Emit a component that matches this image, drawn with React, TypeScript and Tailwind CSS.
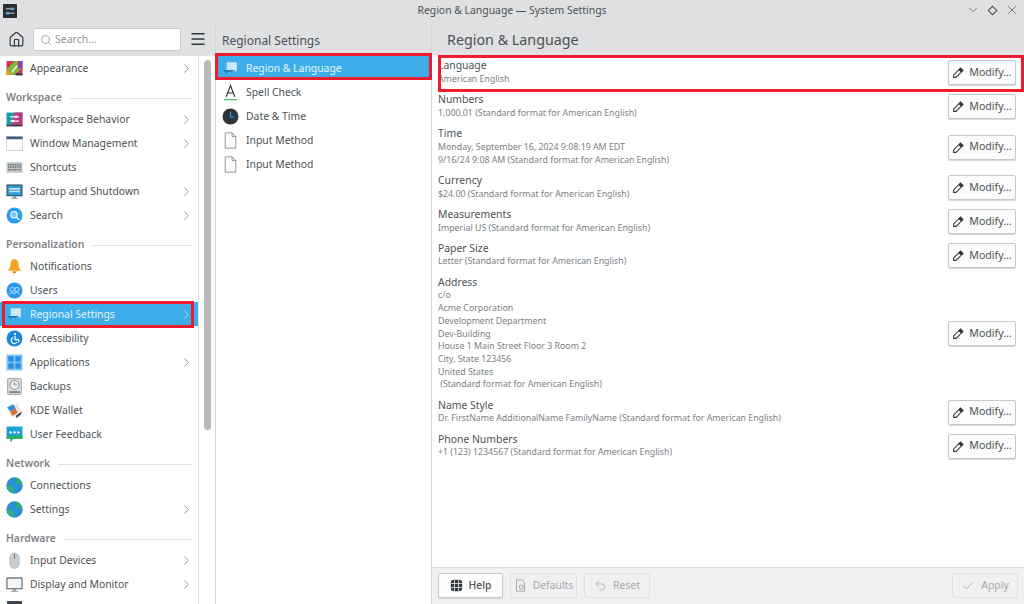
import type { ReactNode } from "react";
import { ChevronRight, ChevronDown, X, Search, Menu, Home, Check, Undo2 } from "lucide-react";

const font = "font-['Noto_Sans',sans-serif]";

function Svg({ children, size = 17 }: { children: ReactNode; size?: number }) {
  return (
    <svg width={size} height={size} viewBox="0 0 16 16" className="shrink-0">
      {children}
    </svg>
  );
}

const Appearance = () => (
  <Svg>
    <rect x="0.5" y="1" width="15" height="13" fill="#d9304f" />
    <path d="M8 1h7.5v6L8 14H.5V9z" fill="#7fba3c" />
    <path d="M11 1h4.5v7L11 8z" fill="#8e44ad" />
    <path d="M.5 9 6 14H.5z" fill="#f39c1f" />
    <path d="M5 11l5-6 1 1-5 6z" fill="#f4f4f4" />
    <rect x="9" y="12.5" width="6.5" height="2" fill="#31363b" />
  </Svg>
);
const Behavior = () => (
  <Svg>
    <rect x="0.5" y="1.5" width="15" height="12" fill="#1d99a8" />
    <path d="M8 1.5h7.5v12H5z" fill="#c43a82" />
    <rect x="0.5" y="13" width="15" height="1.5" fill="#31363b" />
    <path d="M4 5.5h8M4 9.5h8" stroke="#fff" strokeWidth="1" />
    <circle cx="9.5" cy="5.5" r="1.2" fill="#fff" />
    <circle cx="6.5" cy="9.5" r="1.2" fill="#fff" />
  </Svg>
);
const WindowIcon = () => (
  <Svg>
    <rect x="0.5" y="1.5" width="15" height="13" fill="#fcfcfc" stroke="#b6bbc0" strokeWidth="0.6" />
    <rect x="0.5" y="1.5" width="15" height="2.5" fill="#3f5f82" />
  </Svg>
);
const Keyboard = () => (
  <Svg>
    <rect x="0.5" y="3" width="15" height="10" rx="0.5" fill="#bfc5c7" />
    <path d="M2 5.5h12M2 7.7h12M2 9.9h12" stroke="#5c6366" strokeWidth="1.2" strokeDasharray="1 0.6" />
  </Svg>
);
const Monitor = ({ light = false }: { light?: boolean }) => (
  <Svg>
    <rect x="0.5" y="1.5" width="15" height="11" rx="0.5" fill="#31363b" />
    <rect x="1.3" y="2.3" width="13.4" height="9.4" fill={light ? "#f2f6f8" : "#2f9bd8"} />
    {!light && <path d="M3 5.5h10M3 8h10" stroke="#d6e4ea" strokeWidth="1.5" />}
    <path d="M6.5 12.5h3v1.5h-3z" fill="#7f8c8d" />
    <path d="M4.5 14.5h7" stroke="#a5acb0" />
  </Svg>
);
const DarkBox = () => (
  <Svg>
    <rect x="1" y="1" width="14" height="12" fill="#3a4045" />
  </Svg>
);
const SearchIcon = () => (
  <Svg>
    <circle cx="8" cy="8" r="7.5" fill="#2b9df0" />
    <circle cx="7.5" cy="7.3" r="3" fill="#7cc6f7" stroke="#fff" strokeWidth="1" />
    <path d="M9.8 9.6l2.7 2.7" stroke="#fff" strokeWidth="1.2" />
  </Svg>
);
const Bell = () => (
  <Svg>
    <path d="M8 1.2c-2.8 0-3.8 2.2-3.8 4.4 0 3-1 4.6-2.7 6.4h13c-1.7-1.8-2.7-3.4-2.7-6.4C11.800 3.400 10.800 1.200 8 1.200z" fill="#f5a623" />
    <path d="M6 12.500h4a2 2 0 0 1-4 0z" fill="#d98a12" />
  </Svg>
);
const Users = () => (
  <Svg>
    <circle cx="8" cy="8" r="7.5" fill="#2a97ee" />
    <circle cx="6" cy="7" r="2" fill="none" stroke="#bfe0fa" strokeWidth="0.9" />
    <circle cx="10.300" cy="7" r="2" fill="none" stroke="#bfe0fa" strokeWidth="0.9" />
    <path d="M3 11.500c.8-1.500 5.200-1.500 6 0M8 10c1.500-.8 4-.6 5 1.500" stroke="#bfe0fa" strokeWidth="0.9" fill="none" />
  </Svg>
);
const Bubble = () => (
  <Svg>
    <path d="M4.500 2h9.500v8.500H7.500L5 13v-2.500H2l2.500-2z" fill="#cfe6f7" />
    <path d="M1.500 9.500h11l-3 1.500H6.500L4 13.500V11H1.500z" fill="#1b7ac2" />
  </Svg>
);
const Accessibility = () => (
  <Svg>
    <circle cx="8" cy="8" r="7.5" fill="#1e88d8" />
    <circle cx="8.500" cy="3.800" r="1" fill="#fff" />
    <path d="M8.500 5.500v3.500h3l1 2.500M6.800 7a3 3 0 1 0 3.700 4.300" stroke="#fff" strokeWidth="1.100" fill="none" />
  </Svg>
);
const Apps = () => (
  <Svg>
    <rect x="0.500" y="0.500" width="15" height="15" fill="#7cc4f3" />
    <rect x="2.200" y="2.200" width="5" height="5" rx="0.800" fill="#2a8fdc" />
    <rect x="8.800" y="2.200" width="5" height="5" rx="0.800" fill="#2a8fdc" />
    <rect x="2.200" y="8.800" width="5" height="5" rx="0.800" fill="#2a8fdc" />
    <rect x="8.800" y="8.800" width="5" height="5" rx="0.800" fill="#2a8fdc" />
  </Svg>
);
const Backups = () => (
  <Svg>
    <rect x="1.500" y="0.500" width="13" height="15" rx="1" fill="#d9dcdd" stroke="#8b9194" strokeWidth="0.700" />
    <circle cx="8" cy="6.500" r="4.300" fill="#eff0f1" stroke="#7a8084" strokeWidth="0.800" />
    <path d="M8 4v2.500h2.500" stroke="#7a8084" strokeWidth="0.800" fill="none" />
    <rect x="3" y="12.500" width="10" height="1.500" fill="#6f7578" />
  </Svg>
);
const Wallet = () => (
  <Svg>
    <path d="M1 6l9-5 5 8-9 5.500z" fill="#e6e8e9" />
    <path d="M1 5l6-3 2 4-5 3z" fill="#2f8fd8" />
    <path d="M4 9l5-3 2 4-5 3z" fill="#e8672c" />
    <path d="M9 13l6-4-1 3-4 3z" fill="#37536e" />
  </Svg>
);
const Feedback = () => (
  <Svg>
    <rect x="0.500" y="0.500" width="15" height="11.500" fill="#1ea0d8" />
    <path d="M0.500 9h15v3H7l-3 3.500V12H.5z" fill="#27ae60" />
    <circle cx="4.300" cy="6" r="1.100" fill="#fff" />
    <circle cx="8" cy="6" r="1.100" fill="#fff" />
    <circle cx="11.700" cy="6" r="1.100" fill="#fff" />
  </Svg>
);
const Globe = () => (
  <Svg>
    <circle cx="8" cy="8" r="7.700" fill="#2a8fd0" />
    <path d="M1.500 9c2-1.500 3.500-.5 5 .8s1 3-.5 5.500C3.500 14.500 1.800 12 1.500 9zM8.500 1c1.500.8 2 2 1 3s-.5 2.500 1.500 2.500 3-1 4.300-.5c-.6-2.500-3.500-5-6.800-5z" fill="#2fae7a" />
  </Svg>
);
const Mouse = () => (
  <Svg>
    <rect x="3.500" y="1" width="9" height="14.500" rx="4.500" fill="#c9ced1" stroke="#9aa0a4" strokeWidth="0.500" />
    <path d="M8 1.500v5" stroke="#6f7578" strokeWidth="1" />
  </Svg>
);
const Clock = () => (
  <Svg>
    <circle cx="8" cy="8" r="7.500" fill="#2f3438" />
    <path d="M8 3.500V8.500H11.500" stroke="#2b9df0" strokeWidth="1.100" fill="none" />
  </Svg>
);
const FileIcon = () => (
  <Svg>
    <path d="M3 .8h6.500L13 4.300v10.900H3z" fill="#fcfcfc" stroke="#7f8589" strokeWidth="0.800" />
    <path d="M9.500 .8v3.500H13" fill="none" stroke="#7f8589" strokeWidth="0.800" />
  </Svg>
);
const Spell = () => (
  <Svg>
    <path d="M4 12 8 1.500 12 12M5.300 8.500h5.400" stroke="#31363b" strokeWidth="1.100" fill="none" />
    <path d="M2 14.700h12" stroke="#27ae60" strokeWidth="1" />
  </Svg>
);
const Pencil = () => (
  <svg width="13" height="13" viewBox="0 0 16 16" className="shrink-0">
    <path d="M8.500 4.500l3 3-6.500 6.500H2v-3z" fill="none" stroke="#31363b" strokeWidth="1.300" />
    <path d="M8 4 10.500 1.500l4 4L12 8z" fill="#31363b" />
  </svg>
);
const HelpIcon = () => (
  <svg width="13" height="13" viewBox="0 0 16 16" className="shrink-0">
    <rect x="1" y="1" width="14" height="14" rx="4" fill="#31363b" />
    <path d="M5.500 1v14M10.500 1v14M1 5.500h14M1 10.500h14" stroke="#eff0f1" strokeWidth="1" />
  </svg>
);
const DefaultsIcon = () => (
  <svg width="13" height="13" viewBox="0 0 16 16" className="shrink-0">
    <path d="M3 1h6.500L13 4.500V15H3z" fill="none" stroke="#a3a6a8" strokeWidth="1.200" />
    <circle cx="9" cy="10" r="2.500" fill="none" stroke="#a3a6a8" strokeWidth="1.200" />
  </svg>
);
const AppIcon = () => (
  <svg width="14" height="14" viewBox="0 0 16 16" className="shrink-0">
    <rect width="16" height="16" rx="1" fill="#2a2e32" />
    <path d="M3 5.500h10M3 10.500h10" stroke="#dfe3e6" strokeWidth="1" />
    <rect x="9" y="4" width="3" height="3" fill="#3daee9" />
    <rect x="4" y="9" width="3" height="3" fill="#3daee9" />
  </svg>
);

type NavItem = { label: string; icon: ReactNode; more?: boolean; active?: boolean };
type NavGroup = { title?: string; items: NavItem[] };

const groups: NavGroup[] = [
  { items: [{ label: "Appearance", icon: <Appearance />, more: true }] },
  {
    title: "Workspace",
    items: [
      { label: "Workspace Behavior", icon: <Behavior />, more: true },
      { label: "Window Management", icon: <WindowIcon />, more: true },
      { label: "Shortcuts", icon: <Keyboard /> },
      { label: "Startup and Shutdown", icon: <Monitor />, more: true },
      { label: "Search", icon: <SearchIcon />, more: true },
    ],
  },
  {
    title: "Personalization",
    items: [
      { label: "Notifications", icon: <Bell /> },
      { label: "Users", icon: <Users /> },
      { label: "Regional Settings", icon: <Bubble />, more: true, active: true },
      { label: "Accessibility", icon: <Accessibility /> },
      { label: "Applications", icon: <Apps />, more: true },
      { label: "Backups", icon: <Backups /> },
      { label: "KDE Wallet", icon: <Wallet /> },
      { label: "User Feedback", icon: <Feedback /> },
    ],
  },
  {
    title: "Network",
    items: [
      { label: "Connections", icon: <Globe /> },
      { label: "Settings", icon: <Globe />, more: true },
    ],
  },
  {
    title: "Hardware",
    items: [
      { label: "Input Devices", icon: <Mouse />, more: true },
      { label: "Display and Monitor", icon: <Monitor light />, more: true },
      { label: "", icon: <DarkBox /> },
    ],
  },
];

const subItems: NavItem[] = [
  { label: "Region & Language", icon: <Bubble />, active: true },
  { label: "Spell Check", icon: <Spell /> },
  { label: "Date & Time", icon: <Clock /> },
  { label: "Input Method", icon: <FileIcon /> },
  { label: "Input Method", icon: <FileIcon /> },
];

const fmt = "(Standard format for American English)";
const rows: { title: string; lines: string[] }[] = [
  { title: "Language", lines: ["American English"] },
  { title: "Numbers", lines: [`1,000.01 ${fmt}`] },
  { title: "Time", lines: ["Monday, September 16, 2024 9:08:19 AM EDT", `9/16/24 9:08 AM ${fmt}`] },
  { title: "Currency", lines: [`$24.00 ${fmt}`] },
  { title: "Measurements", lines: [`Imperial US ${fmt}`] },
  { title: "Paper Size", lines: [`Letter ${fmt}`] },
  {
    title: "Address",
    lines: [
      "c/o",
      "Acme Corporation",
      "Development Department",
      "Dev-Building",
      "House 1 Main Street Floor 3 Room 2",
      "City, State 123456",
      "United States",
      `\u00a0${fmt}`,
    ],
  },
  { title: "Name Style", lines: [`Dr. FirstName AdditionalName FamilyName ${fmt}`] },
  { title: "Phone Numbers", lines: [`+1 (123) 1234567 ${fmt}`] },
];

function Row({ item }: { item: NavItem }) {
  return (
    <div
      className={`flex h-6 items-center pl-[6px] pr-[4px] text-[10.4px] ${
        item.active ? "bg-[#3daee9] text-[#e8f5fc]" : "text-[#4d5155]"
      }`}
    >
      <span className="flex w-[24px] shrink-0">{item.icon}</span>
      <span className="flex-1 truncate pt-[2px]">{item.label}</span>
      {item.more && (
        <ChevronRight size={15} strokeWidth={1.2} className={item.active ? "text-[#d5edfa]" : "text-[#75797c]"} />
      )}
    </div>
  );
}

function Sidebar() {
  return (
    <div className="flex w-[216px] shrink-0 flex-col border-r border-[#d1d3d5]">
      <div className="flex h-[31px] items-start gap-[8px] pl-[8px] pr-[8px] pt-[3px]">
        <Home size={17} strokeWidth={1.6} className="mt-[3px] shrink-0 text-[#31363b]" />
        <div className="flex h-[23px] w-[150px] items-center gap-[3px] rounded-[2px] border border-[#c9cbcd] bg-white pl-[6px]">
          <Search size={12} strokeWidth={1.5} className="text-[#8a8e91]" />
          <span className="text-[10.5px] text-[#93979a]">Search...</span>
        </div>
        <Menu size={18} strokeWidth={2} className="mt-[2px] shrink-0 text-[#31363b]" />
      </div>
      <div className="flex min-h-0 flex-1 bg-white">
        <div className="w-[199px] shrink-0 overflow-hidden border-r border-[#e4e5e6]">
          {groups.map((g, i) => (
            <div key={i}>
              {g.title && (
                <div className="flex h-[27px] items-center gap-2 pl-[6px] pr-[6px] pt-[9px]">
                  <span className="text-[10.4px] font-semibold text-[#7f8386]">{g.title}</span>
                  <span className="h-px flex-1 bg-[#e2e3e4]" />
                </div>
              )}
              {g.items.map((it) => (
                <div key={it.label} className="relative">
                  <Row item={it} />
                  {it.active && (
                    <div className="absolute left-[2px] right-[4px] top-[-1px] bottom-[-2px] border-[3px] border-[#ee1c2e]" />
                  )}
                </div>
              ))}
            </div>
          ))}
        </div>
        <div className="flex-1 pl-[5px] pt-[4px]">
          <div className="h-[370px] w-[7px] rounded-full bg-[#b9bbbd]" />
        </div>
      </div>
    </div>
  );
}

function Middle() {
  return (
    <div className="flex w-[216px] shrink-0 flex-col border-r border-[#d1d3d5]">
      <div className="flex h-[31px] items-center pl-[6px] text-[12px] text-[#4d5155]">Regional Settings</div>
      <div className="flex-1 bg-white">
        {subItems.map((it, i) => (
          <div key={i} className="relative">
            <Row item={it} />
            {it.active && (
              <div className="absolute left-[-1px] right-[-1px] top-[-3px] bottom-0 border-[3px] border-[#ee1c2e]" />
            )}
          </div>
        ))}
      </div>
    </div>
  );
}

function ModifyButton() {
  return (
    <button className="flex h-[25px] w-[68px] translate-y-[1px] items-center justify-center gap-[4px] rounded-[2px] border border-[#c6c8ca] bg-[#fcfcfc] text-[10.6px] text-[#4d5155] shadow-[0_1px_1px_#d5d6d8]">
      <Pencil />
      Modify...
    </button>
  );
}

function FooterButton({ icon, label, width, disabled }: { icon: ReactNode; label: string; width: string; disabled?: boolean }) {
  return (
    <button
      className={`flex h-[25px] items-center justify-center gap-[6px] rounded-[2px] border text-[10.4px] ${width} ${
        disabled
          ? "border-[#e0e1e3] text-[#a6a9ab]"
          : "border-[#c6c8ca] bg-[#fcfcfc] font-medium text-[#4d5155] shadow-[0_1px_1px_#d5d6d8]"
      }`}
    >
      {icon}
      {label}
    </button>
  );
}

function Content() {
  return (
    <div className="flex min-w-0 flex-1 flex-col">
      <div className="flex h-[30px] items-center pl-[15px] pb-[1px] text-[14.3px] text-[#4d5155]">Region &amp; Language</div>
      <div className="flex min-h-0 flex-1 flex-col overflow-hidden bg-white">
        {rows.map((r, i) => (
          <div key={r.title} className="relative flex items-center pl-[6px] pr-[8px] py-[3.35px]">
            <div className="min-w-0 flex-1">
              <div className="h-[14.6px] text-[10.4px] leading-[14px] text-[#4d5155]">{r.title}</div>
              {r.lines.map((l, j) => (
                <div key={j} className="h-[12.7px] text-[8.8px] leading-[12.7px] whitespace-pre text-[#7b7f82]">
                  {l}
                </div>
              ))}
            </div>
            <ModifyButton />
            {i === 0 && (
              <div className="absolute left-[6px] right-0 top-0 bottom-[-3px] border-[3px] border-[#ee1c2e]" />
            )}
          </div>
        ))}
      </div>
      <div className="flex h-[37px] items-center gap-[7px] border-t border-[#d8dadb] bg-[#eff0f1] pl-[6px] pr-[6px] pb-[1px]">
        <FooterButton icon={<HelpIcon />} label="Help" width="w-[65px]" />
        <FooterButton icon={<DefaultsIcon />} label="Defaults" width="w-[67px]" disabled />
        <FooterButton
          icon={<Undo2 size={13} strokeWidth={1.3} className="text-[#a3a6a8]" />}
          label="Reset"
          width="w-[66px]"
          disabled
        />
        <div className="flex-1" />
        <FooterButton
          icon={<Check size={14} strokeWidth={1.4} className="text-[#a3a6a8]" />}
          label="Apply"
          width="w-[66px]"
          disabled
        />
      </div>
    </div>
  );
}

export default function App() {
  return (
    <div className={`flex h-[604px] w-[1024px] flex-col overflow-hidden bg-[#dee0e2] ${font}`}>
      <div className="relative flex h-[25px] shrink-0 items-center justify-center pb-[3px] text-[10.4px] text-[#4d5155]">
        <span className="absolute left-[3px] top-[4px]">
          <AppIcon />
        </span>
        Region &amp; Language — System Settings
        <div className="absolute right-[5px] top-[3px] flex items-center gap-[9px] text-[#55595c]">
          <ChevronDown size={14} strokeWidth={1.3} />
          <span className="h-[7px] w-[7px] rotate-45 border border-[#44484c]" />
          <X size={14} strokeWidth={1.3} />
        </div>
      </div>
      <div className="flex min-h-0 flex-1">
        <Sidebar />
        <Middle />
        <Content />
      </div>
    </div>
  );
}
